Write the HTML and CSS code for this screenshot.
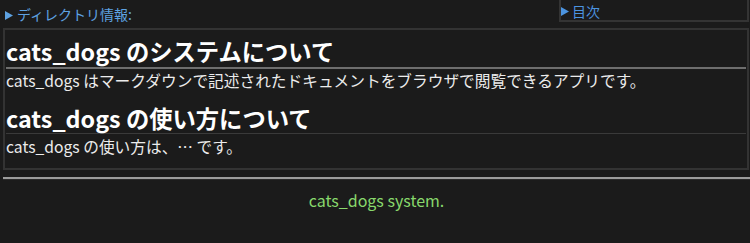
FILE: index.html
```html
<!DOCTYPE html>
<html lang="ja">
<head>
<meta charset="utf-8">
<title>cats_dogs</title>
<link rel="stylesheet" href="styles.css">
</head>
<body>
<div class="top">
  <div class="dirinfo"><svg class="tri" width="8" height="9" viewBox="0 0 8 9"><path d="M0 0 L8 4.5 L0 9 Z"/></svg><span>ディレクトリ情報:</span></div>
  <div class="toc"><svg class="tri" width="8" height="9" viewBox="0 0 8 9"><path d="M0 0 L8 4.5 L0 9 Z"/></svg><span>目次</span></div>
</div>
<div class="doc">
  <h1 class="h1">cats_dogs のシステムについて</h1>
  <p class="para">cats_dogs はマークダウンで記述されたドキュメントをブラウザで閲覧できるアプリです。</p>
  <h2 class="h2">cats_dogs の使い方について</h2>
  <p class="para para-last">cats_dogs の使い方は、… です。</p>
</div>
<hr class="rule">
<div class="footer">cats_dogs system.</div>
</body>
</html>
```
FILE: styles.css
```css
html, body {
  margin: 0;
  padding: 0;
  background: #1b1b1b;
  font-family: "Noto Sans CJK JP", "Noto Sans", sans-serif;
  color: #eeeeee;
}
.top {
  display: flex;
  justify-content: space-between;
  align-items: flex-start;
  height: 22px;
}
.dirinfo {
  display: flex;
  align-items: center;
  padding: 7px 0 0 5px;
  font-size: 14px;
  line-height: 15px;
  color: #5ea2e2;
}
.dirinfo .tri { margin: 1px 4px 0 0; fill: #5ea2e2; }
.toc {
  box-sizing: border-box;
  width: 190px;
  height: 22px;
  margin-right: 1px;
  border: 2px solid #343434;
  border-top: none;
  display: flex;
  align-items: center;
  padding: 2px 0 0 0;
  font-size: 14px;
  line-height: 18px;
  color: #4c94e0;
}
.toc .tri { margin: 0 3px 0 0; fill: #4c94e0; }
.doc {
  margin: 6px 1px 0 3px;
  border: 2px solid #333333;
  padding: 0 1px 10px 1px;
}
.h1, .h2 {
  margin: 0;
  font-size: 23.3px;
  font-weight: 700;
  color: #ffffff;
}
.h1 {
  margin-top: 6px;
  line-height: 31px;
  border-bottom: 2px solid #6e6e6e;
}
.h2 {
  margin-top: 11px;
  line-height: 30px;
  border-bottom: 1px solid #3a3a3a;
}
.para {
  margin: 1px 0 0 0;
  font-size: 15.7px;
  line-height: 22px;
  color: #ececec;
}
.para-last { margin-top: 2px; }
.rule {
  margin: 7px 0 0 3px;
  height: 0;
  border: none;
  border-top: 2px solid #9c9c9c;
  border-bottom: 1px solid #2a2a2a;
}
.footer {
  margin: 9px 0 0 3px;
  text-align: center;
  font-size: 16px;
  line-height: 22px;
  color: #88d86c;
}
```
